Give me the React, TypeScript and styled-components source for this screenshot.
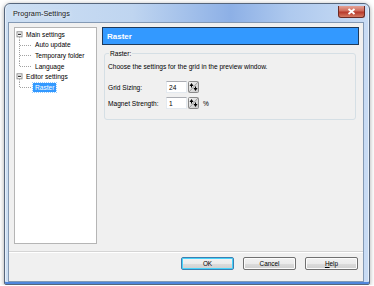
import React from 'react';
import styled, { createGlobalStyle } from 'styled-components';

const GlobalStyle = createGlobalStyle`
  html, body {
    margin: 0;
    padding: 0;
    background: #ffffff;
  }
  body {
    font-family: 'Liberation Sans', Arial, sans-serif;
    font-size: 6.6px;
    color: #000;
  }
`;

// --- window frame ---

const Window = styled.div`
  box-sizing: border-box;
  margin: 3px 0 0 4px;
  width: 366px;
  height: 282px;
  border: 1px solid #56667c;
  border-radius: 6px 6px 2px 2px;
  background: linear-gradient(
    90deg,
    #cddff3 0%,
    #bfd5f0 35%,
    #8db0e6 62%,
    #aec9ee 78%,
    #c9dcf4 100%
  );
  box-shadow: 0 1px 5px rgba(0, 0, 0, 0.35), inset 0 -2px 0 #4f86dc, inset 1px 0 0 #e6effa,
    inset -1px 0 0 #e6effa;
  padding: 0 5px 2px 3px;
  display: flex;
  flex-direction: column;
`;

const TitleBar = styled.div`
  height: 18px;
  display: flex;
  align-items: center;
  justify-content: space-between;
  padding-left: 5px;
`;

const Title = styled.span`
  font-family: 'Liberation Sans', Arial, sans-serif;
  font-size: 7.3px;
  color: #1a1a1a;
  text-shadow: 0 0 4px rgba(255, 255, 255, 0.9);
`;

const CloseButton = styled.div`
  box-sizing: border-box;
  width: 27px;
  height: 12px;
  margin-top: -3px;
  margin-right: -1px;
  border: 1px solid #6b2a24;
  border-top: none;
  border-radius: 0 0 3px 3px;
  background: linear-gradient(180deg, #e4a295 0%, #cf6b5b 45%, #b7382a 55%, #d57a62 100%);
  display: flex;
  align-items: center;
  justify-content: center;
`;

const Client = styled.div`
  flex: 1;
  box-sizing: border-box;
  border: 1px solid #8399b4;
  background: #f0f0f0;
  display: flex;
  flex-direction: column;
`;

const Body = styled.div`
  display: flex;
  gap: 5px;
  padding: 4px 4px 0 5px;
  height: 217px;
`;

// --- tree ---

const Tree = styled.div`
  box-sizing: border-box;
  width: 83px;
  border: 1px solid #b5b5b5;
  background: #ffffff;
  padding-top: 1px;
`;

const TreeRow = styled.div`
  display: flex;
  align-items: center;
  height: 10.6px;
`;

const Connector = styled.svg<{ $w: number }>`
  width: ${(p) => p.$w}px;
  height: 10.6px;
  flex: none;
`;

const NodeLabel = styled.span<{ $selected?: boolean }>`
  padding: 0 2px;
  line-height: 9px;
  white-space: nowrap;
  background: ${(p) => (p.$selected ? '#3399ff' : 'transparent')};
  color: ${(p) => (p.$selected ? '#ffffff' : '#000000')};
  outline: ${(p) => (p.$selected ? '1px dotted #99ccff' : 'none')};
`;

// --- right panel ---

const Panel = styled.div`
  flex: 1;
  display: flex;
  flex-direction: column;
`;

const Header = styled.div`
  box-sizing: border-box;
  height: 18px;
  border: 1px solid #1f3a5a;
  background: #3399ff;
  color: #ffffff;
  font-weight: bold;
  font-size: 8px;
  display: flex;
  align-items: center;
  padding-left: 4px;
`;

const Group = styled.fieldset`
  margin: 5px 3px 0 2px;
  padding: 4px 3px 10px 3px;
  border: 1px solid #d5dfe5;
  border-radius: 3px;
  min-width: 0;
`;

const Legend = styled.legend`
  padding: 0 1px;
  margin-left: 1px;
  font-size: 6.6px;
`;

const Hint = styled.div`
  margin: 2px 0 11px 0;
`;

const FieldRow = styled.div`
  display: flex;
  align-items: center;
  height: 12px;
  margin-bottom: 4px;
  &:last-child {
    margin-bottom: 0;
  }
`;

const FieldLabel = styled.span`
  width: 58px;
`;

const NumberBox = styled.div`
  box-sizing: border-box;
  width: 21px;
  height: 12px;
  background: #ffffff;
  border: 1px solid #e3e9ef;
  border-top-color: #abadb3;
  padding-left: 2px;
  display: flex;
  align-items: center;
`;

const Unit = styled.span`
  margin-left: 4px;
`;

// --- footer ---

const Separator = styled.div`
  margin-top: 7px;
  height: 1px;
  background: #d5d5d5;
  border-bottom: 1px solid #ffffff;
`;

const ButtonRow = styled.div`
  display: flex;
  justify-content: flex-end;
  gap: 9px;
  padding: 4px 5px 0 0;
`;

const DialogButton = styled.div<{ $default?: boolean }>`
  box-sizing: border-box;
  width: 53px;
  height: 13px;
  border: 1px solid ${(p) => (p.$default ? '#3c7fb1' : '#707070')};
  border-radius: 2px;
  background: linear-gradient(180deg, #f2f2f2 0%, #ebebeb 50%, #dddddd 51%, #cfcfcf 100%);
  box-shadow: ${(p) => (p.$default ? 'inset 0 0 0 1px #48d3fb' : 'inset 0 0 0 1px #fcfcfc')};
  display: flex;
  align-items: center;
  justify-content: center;
  font-size: 6.4px;
`;

const Spinner = () => (
  <svg width="11" height="12" viewBox="0 0 11 12" style={{ marginLeft: 1 }}>
    <defs>
      <linearGradient id="spg" x1="0" y1="0" x2="1" y2="1">
        <stop offset="0" stopColor="#f4f4f4" />
        <stop offset="1" stopColor="#c8c8c8" />
      </linearGradient>
    </defs>
    <rect x="0.5" y="0.5" width="10" height="11" rx="1" fill="url(#spg)" stroke="#8a8a8a" />
    <line x1="10" y1="1" x2="1" y2="11" stroke="#9a9a9a" />
    <path d="M1.5 5 L3.5 2 L5.5 5 Z" fill="#000" />
    <path d="M5.5 7 L7.5 10 L9.5 7 Z" fill="#000" />
    <line x1="3.5" y1="4.5" x2="3.5" y2="6.5" stroke="#000" />
    <line x1="7.5" y1="5.5" x2="7.5" y2="7.5" stroke="#000" />
  </svg>
);

type Node = { label: string; depth: 0 | 1; last?: boolean; selected?: boolean };

const nodes: Node[] = [
  { label: 'Main settings', depth: 0 },
  { label: 'Auto update', depth: 1 },
  { label: 'Temporary folder', depth: 1 },
  { label: 'Language', depth: 1, last: true },
  { label: 'Editor settings', depth: 0 },
  { label: 'Raster', depth: 1, last: true, selected: true },
];

const dot = { stroke: '#a0a0a0', strokeDasharray: '1 1', strokeWidth: 1 };

const TreeNode = ({ node }: { node: Node }) => {
  if (node.depth === 0) {
    return (
      <TreeRow>
        <Connector $w={9} viewBox="0 0 9 10.6">
          <line x1="4.5" y1="7.8" x2="4.5" y2="10.6" {...dot} />
          <rect x="2" y="2.8" width="5" height="5" fill="#fff" stroke="#919191" strokeWidth="1" />
          <line x1="3" y1="5.3" x2="6" y2="5.3" stroke="#000" strokeWidth="1" />
        </Connector>
        <NodeLabel>{node.label}</NodeLabel>
      </TreeRow>
    );
  }
  return (
    <TreeRow>
      <Connector $w={18} viewBox="0 0 18 10.6">
        <line x1="4.5" y1="0" x2="4.5" y2={node.last ? 5.3 : 10.6} {...dot} />
        <line x1="5" y1="5.5" x2="17" y2="5.5" {...dot} />
      </Connector>
      <NodeLabel $selected={node.selected}>{node.label}</NodeLabel>
    </TreeRow>
  );
};

export default function App() {
  return (
    <>
      <GlobalStyle />
      <Window>
        <TitleBar>
          <Title>Program-Settings</Title>
          <CloseButton>
            <svg width="9" height="7" viewBox="0 0 9 7">
              <path d="M1.5 1 L7.5 6 M7.5 1 L1.5 6" stroke="#ffffff" strokeWidth="1.8" />
            </svg>
          </CloseButton>
        </TitleBar>
        <Client>
          <Body>
            <Tree>
              {nodes.map((n) => (
                <TreeNode key={n.label} node={n} />
              ))}
            </Tree>
            <Panel>
              <Header>Raster</Header>
              <Group>
                <Legend>Raster:</Legend>
                <Hint>Choose the settings for the grid in the preview window.</Hint>
                <FieldRow>
                  <FieldLabel>Grid Sizing:</FieldLabel>
                  <NumberBox>24</NumberBox>
                  <Spinner />
                </FieldRow>
                <FieldRow>
                  <FieldLabel>Magnet Strength:</FieldLabel>
                  <NumberBox>1</NumberBox>
                  <Spinner />
                  <Unit>%</Unit>
                </FieldRow>
              </Group>
            </Panel>
          </Body>
          <Separator />
          <ButtonRow>
            <DialogButton $default>OK</DialogButton>
            <DialogButton>Cancel</DialogButton>
            <DialogButton>
              <span>
                <u>H</u>elp
              </span>
            </DialogButton>
          </ButtonRow>
        </Client>
      </Window>
    </>
  );
}
